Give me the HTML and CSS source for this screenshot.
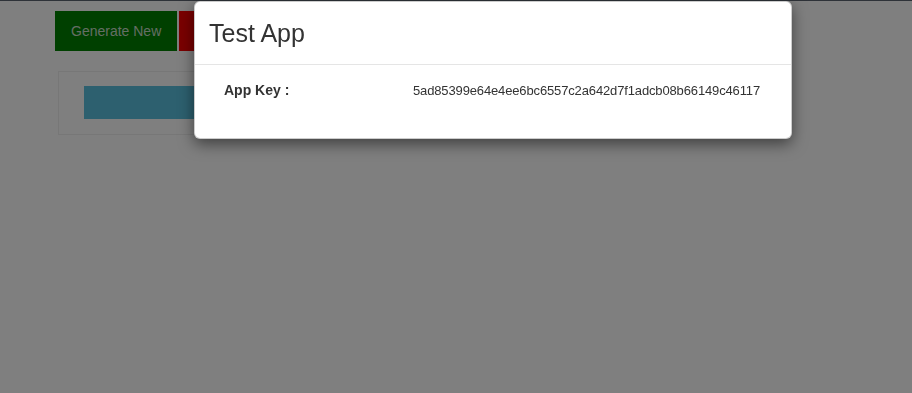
FILE: index.html
```html
<!DOCTYPE html>
<html>
<head>
<meta charset="utf-8">
<title>Test App</title>
<link rel="stylesheet" href="styles.css">
</head>
<body>
<div class="topline"></div>
<main class="page">
  <div class="actions">
    <button class="btn btn-green">Generate New</button>
    <button class="btn btn-red" aria-label="Delete"></button>
  </div>
  <section class="panel">
    <div class="info-bar"></div>
  </section>
</main>
<div class="backdrop"></div>
<div class="modal">
  <header class="modal-header">
    <h4 class="modal-title">Test App</h4>
  </header>
  <div class="modal-body">
    <div class="row">
      <span class="label">App Key :</span>
      <span class="value">5ad85399e64e4ee6bc6557c2a642d7f1adcb08b66149c46117</span>
    </div>
  </div>
</div>
</body>
</html>
```

FILE: styles.css
```css
html, body {
  margin: 0;
  padding: 0;
  background: #ffffff;
  font-family: "Liberation Sans", Arial, sans-serif;
  font-size: 14px;
  color: #333333;
  height: 100%;
  overflow: hidden;
}

.topline {
  height: 1px;
  background: #5c6470;
}

.page {
  padding: 10px 0 0 55px;
}

.actions {
  display: flex;
  gap: 2px;
}

.btn {
  border: 0;
  margin: 0;
  padding: 10px 16px;
  font-family: "Liberation Sans", Arial, sans-serif;
  font-size: 14px;
  line-height: 20px;
  height: 40px;
  color: #c8dcc8;
  cursor: pointer;
}

.btn-green {
  background: #008000;
}

.btn-red {
  background: #f50000;
  width: 110px;
}

.panel {
  margin: 20px 0 0 3px;
  width: 400px;
  height: 48px;
  border: 1px solid #eeeeee;
  padding: 14px 25px 0;
  box-sizing: content-box;
}

.info-bar {
  width: 300px;
  height: 33px;
  background: #5bc0de;
}

.backdrop {
  position: fixed;
  inset: 0;
  background: rgba(0, 0, 0, 0.5);
}

.modal {
  position: absolute;
  top: 1px;
  left: 194px;
  width: 598px;
  box-sizing: border-box;
  background: #ffffff;
  border: 1px solid rgba(0, 0, 0, 0.2);
  border-radius: 6px;
  box-shadow: 0 5px 15px rgba(0, 0, 0, 0.5);
}

.modal-header {
  padding: 15px 15px 15px 14px;
  border-bottom: 1px solid #e5e5e5;
}

.modal-title {
  margin: 0;
  font-size: 25px;
  line-height: 32px;
  font-weight: normal;
  color: #333333;
}

.modal-body {
  padding: 15px 15px 37px 14px;
}

.row {
  display: flex;
  align-items: baseline;
  line-height: 20px;
}

.label {
  width: 189px;
  padding-left: 15px;
  font-weight: bold;
  font-size: 14px;
}

.value {
  font-size: 13px;
  letter-spacing: -0.14px;
  color: #333333;
}
```
